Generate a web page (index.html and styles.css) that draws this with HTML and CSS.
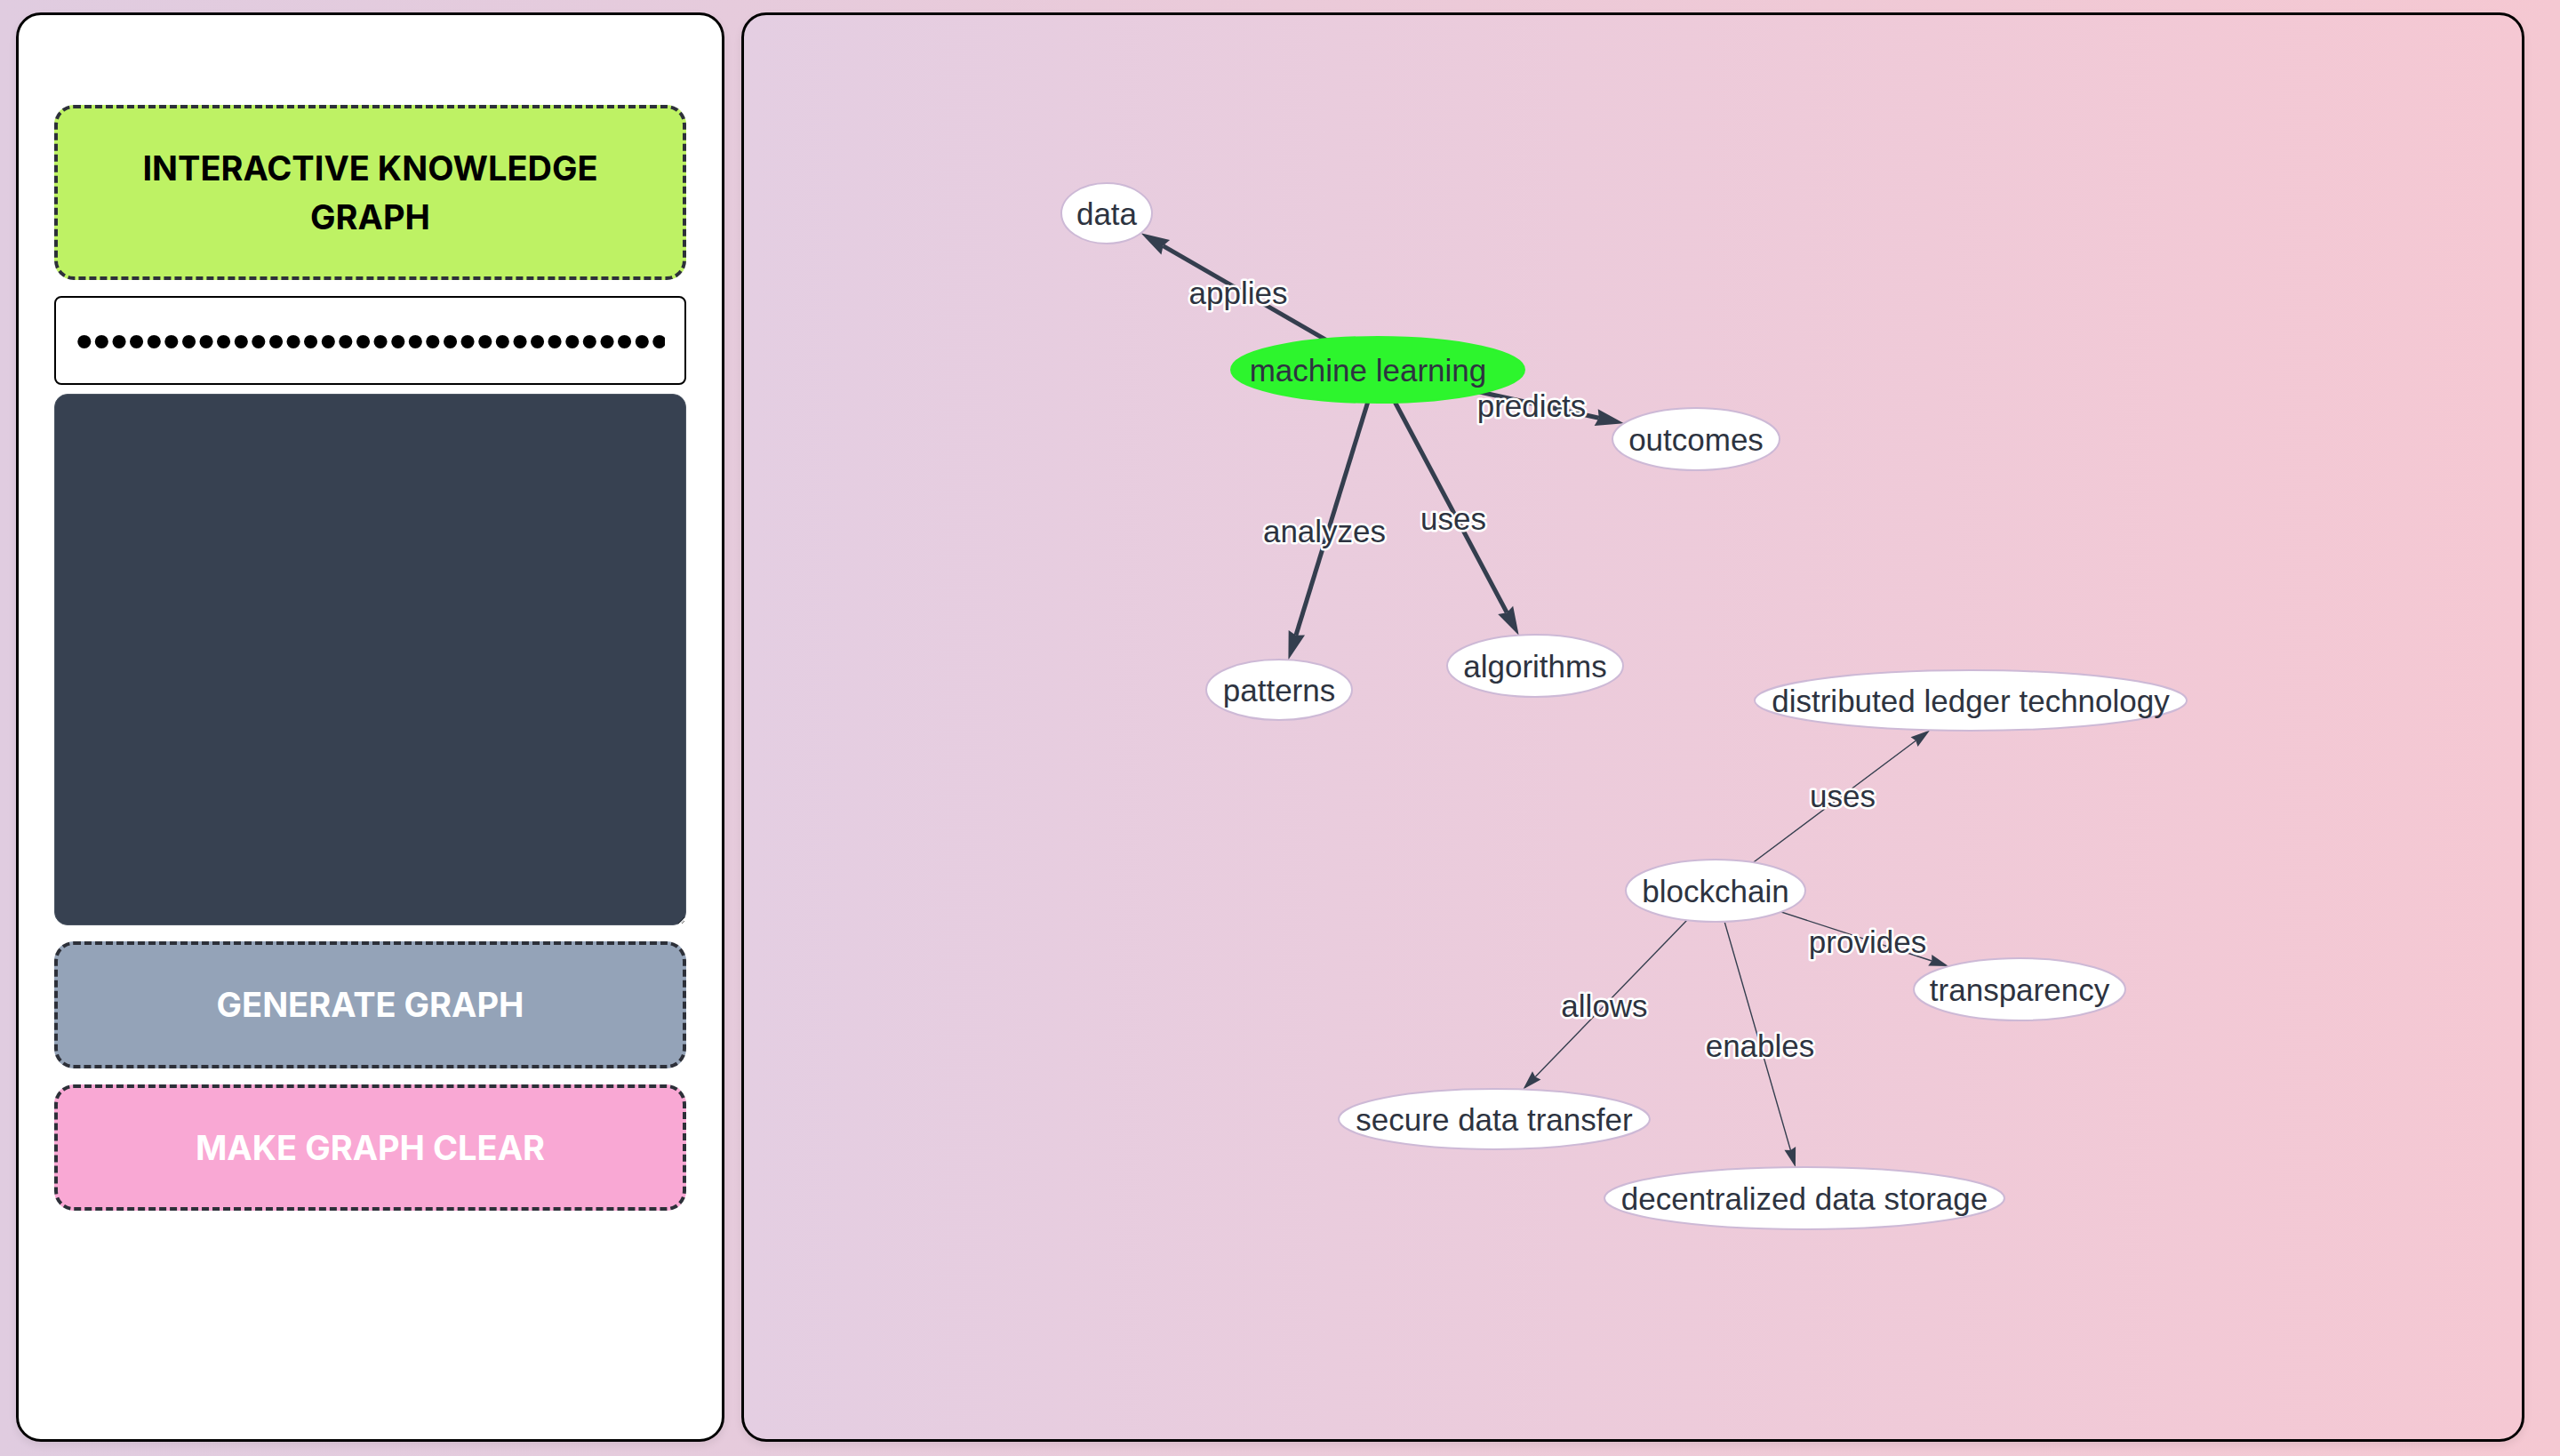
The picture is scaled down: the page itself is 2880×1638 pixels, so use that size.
FILE: index.html
```html
<!DOCTYPE html>
<html lang="en">
<head>
    <meta charset="UTF-8">
    <meta name="viewport" content="width=device-width, initial-scale=1.0">
    <title>Interactive Knowledge Graph</title>
    <link rel="stylesheet" href="styles.css">
</head>
<body>
    <div class="sidebar">
        <div class="title-box">INTERACTIVE KNOWLEDGE GRAPH</div>
        <input type="password" class="key-input" value="sk-proj-8f2a9c1d7e4b6a3f0c5d9e2b7a1f4c8d6e3b9a0f">
        <textarea class="text-input"></textarea>
        <button class="btn btn-generate">GENERATE GRAPH</button>
        <button class="btn btn-clear">MAKE GRAPH CLEAR</button>
    </div>

    <div class="graph-panel">
        <svg class="graph" viewBox="837 17 2000 1602">
            <defs>
                <marker id="arrow-lg" markerUnits="userSpaceOnUse" markerWidth="32" markerHeight="20" refX="3.2" refY="0" orient="auto" overflow="visible">
                    <path class="arrow-head" d="M0,-9.6 L32,0 L0,9.6 L3.2,0 Z"/>
                </marker>
                <marker id="arrow-sm" markerUnits="userSpaceOnUse" markerWidth="22" markerHeight="14" refX="2.2" refY="0" orient="auto" overflow="visible">
                    <path class="arrow-head" d="M0,-6.6 L22,0 L0,6.6 L2.2,0 Z"/>
                </marker>
            </defs>

            <!-- machine learning cluster -->
            <g class="edges edges-bold">
                <line x1="1550" y1="416" x2="1308.5" y2="276.6" marker-end="url(#arrow-lg)"/>
                <line x1="1550" y1="416" x2="1798.8" y2="470.2" marker-end="url(#arrow-lg)"/>
                <line x1="1550" y1="416" x2="1457.9" y2="714.8" marker-end="url(#arrow-lg)"/>
                <line x1="1550" y1="416" x2="1695.2" y2="689.2" marker-end="url(#arrow-lg)"/>
            </g>

            <!-- blockchain cluster -->
            <g class="edges edges-thin">
                <line x1="1930" y1="1002" x2="2155.3" y2="833.3" marker-end="url(#arrow-sm)"/>
                <line x1="1930" y1="1002" x2="2173.3" y2="1081" marker-end="url(#arrow-sm)"/>
                <line x1="1930" y1="1002" x2="1727.2" y2="1211.4" marker-end="url(#arrow-sm)"/>
                <line x1="1930" y1="1002" x2="2014.4" y2="1294" marker-end="url(#arrow-sm)"/>
            </g>

            <g class="edge-labels">
                <text x="1393" y="329">applies</text>
                <text x="1723" y="456">predicts</text>
                <text x="1490" y="597">analyzes</text>
                <text x="1635" y="583">uses</text>
                <text x="2073" y="895">uses</text>
                <text x="2101" y="1059">provides</text>
                <text x="1805" y="1131">allows</text>
                <text x="1980" y="1176">enables</text>
            </g>

            <g class="nodes">
                <ellipse cx="1245" cy="240" rx="51" ry="34"/>
                <text x="1245" y="240">data</text>

                <ellipse class="node-main" cx="1550" cy="416" rx="165" ry="37"/>
                <text x="1539" y="416">machine learning</text>

                <ellipse cx="1908" cy="494" rx="94" ry="35"/>
                <text x="1908" y="494">outcomes</text>

                <ellipse cx="1439" cy="776" rx="82" ry="34"/>
                <text x="1439" y="776">patterns</text>

                <ellipse cx="1727" cy="749" rx="99" ry="35"/>
                <text x="1727" y="749">algorithms</text>

                <ellipse cx="2217" cy="788" rx="243" ry="34"/>
                <text x="2217" y="788">distributed ledger technology</text>

                <ellipse cx="1930" cy="1002" rx="101" ry="35"/>
                <text x="1930" y="1002">blockchain</text>

                <ellipse cx="2272" cy="1113" rx="119" ry="35"/>
                <text x="2272" y="1113">transparency</text>

                <ellipse cx="1681" cy="1259" rx="175" ry="34"/>
                <text x="1681" y="1259">secure data transfer</text>

                <ellipse cx="2030" cy="1348" rx="225" ry="35"/>
                <text x="2030" y="1348">decentralized data storage</text>
            </g>
        </svg>
    </div>
</body>
</html>
```

FILE: styles.css
```css
html, body {
    height: 100%;
}

body {
    margin: 0;
    padding: 14px 40px 16px 18px;
    box-sizing: border-box;
    display: flex;
    gap: 19px;
    font-family: "Inter", "Liberation Sans", sans-serif;
    background: linear-gradient(90deg, #e0cce0 0%, #f5c8d2 100%);
}

.sidebar {
    flex: 0 0 797px;
    min-width: 0;
    box-sizing: border-box;
    display: flex;
    flex-direction: column;
    padding: 101px 40px 0 40px;
    background-color: #ffffff;
    border: 3px solid #000000;
    border-radius: 28px;
    box-shadow: 0 4px 10px rgba(0, 0, 0, 0.08);
}

.title-box {
    padding: 40px;
    margin-bottom: 18px;
    background-color: #bef264;
    border: 4px dashed #2d3039;
    border-radius: 22px;
    font-size: 38px;
    line-height: 54.5px;
    font-weight: 700;
    text-align: center;
    color: #000000;
}

.key-input {
    width: 100%;
    min-width: 0;
    height: 100px;
    box-sizing: border-box;
    margin: 0 0 10px 0;
    padding: 0 22px;
    border: 2px solid #000000;
    border-radius: 8px;
    background-color: #ffffff;
    font-family: "Liberation Sans", Arial, sans-serif;
    font-size: 56px;
    color: #000000;
    outline: none;
}

.text-input {
    height: 598px;
    box-sizing: border-box;
    margin: 0 0 18px 0;
    padding: 16px;
    border: 1px solid #4b5563;
    border-radius: 15px;
    background-color: #374151;
    color: #ffffff;
    font-family: "Inter", sans-serif;
    font-size: 28px;
    resize: vertical;
    outline: none;
}

.btn {
    display: block;
    width: 100%;
    padding: 40px 20px;
    border: 4px dashed #2d3039;
    border-radius: 22px;
    font-family: "Inter", sans-serif;
    font-size: 38px;
    line-height: 54.5px;
    font-weight: 700;
    color: #ffffff;
    cursor: pointer;
}

.btn-generate {
    margin-bottom: 18px;
    background-color: #94a3b8;
}

.btn-clear {
    background-color: #f9a8d4;
}

.graph-panel {
    flex: 1;
    min-width: 0;
    border: 3px solid #000000;
    border-radius: 28px;
    background: linear-gradient(90deg, #e4cee2 0%, #f5c8d3 100%);
    box-shadow: 0 4px 10px rgba(0, 0, 0, 0.08);
    overflow: hidden;
}

.graph {
    display: block;
    width: 100%;
    height: 100%;
}

.arrow-head {
    fill: #343e4e;
}

.edges line {
    stroke: #343e4e;
}

.edges-bold line {
    stroke-width: 5;
}

.edges-thin line {
    stroke-width: 1.4;
}

.graph text {
    font-family: "Liberation Sans", Arial, sans-serif;
    font-size: 35px;
    text-anchor: middle;
    dominant-baseline: central;
    fill: #2d3340;
}

.edge-labels text {
    stroke: #ffffff;
    stroke-width: 5px;
    stroke-linejoin: round;
    paint-order: stroke;
}

.nodes ellipse {
    fill: #ffffff;
    stroke: #cdb9d6;
    stroke-width: 2;
}

.nodes .node-main {
    fill: #2df52d;
    stroke: #2df52d;
}
```
